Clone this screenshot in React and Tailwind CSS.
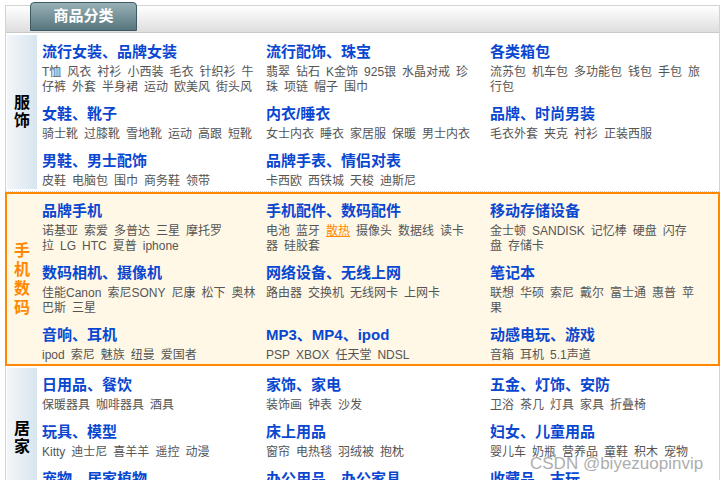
const sections = [
  {
    label: ["服", "饰"],
    hot: false,
    rows: [
      [
        { t: "流行女装、品牌女装", l: [["T恤", "风衣", "衬衫", "小西装", "毛衣", "针织衫", "牛"], ["仔裤", "外套", "半身裙", "运动", "欧美风", "街头风"]] },
        { t: "流行配饰、珠宝", l: [["翡翠", "钻石", "K金饰", "925银", "水晶对戒", "珍"], ["珠", "项链", "帽子", "围巾"]] },
        { t: "各类箱包", l: [["流苏包", "机车包", "多功能包", "钱包", "手包", "旅"], ["行包"]] },
      ],
      [
        { t: "女鞋、靴子", l: [["骑士靴", "过膝靴", "雪地靴", "运动", "高跟", "短靴"]] },
        { t: "内衣/睡衣", l: [["女士内衣", "睡衣", "家居服", "保暖", "男士内衣"]] },
        { t: "品牌、时尚男装", l: [["毛衣外套", "夹克", "衬衫", "正装西服"]] },
      ],
      [
        { t: "男鞋、男士配饰", l: [["皮鞋", "电脑包", "围巾", "商务鞋", "领带"]] },
        { t: "品牌手表、情侣对表", l: [["卡西欧", "西铁城", "天梭", "迪斯尼"]] },
        null,
      ],
    ],
  },
  {
    label: ["手", "机", "数", "码"],
    hot: true,
    rows: [
      [
        { t: "品牌手机", l: [["诺基亚", "索爱", "多普达", "三星", "摩托罗"], ["拉", "LG", "HTC", "夏普", "iphone"]] },
        { t: "手机配件、数码配件", l: [["电池", "蓝牙", "*散热", "摄像头", "数据线", "读卡"], ["器", "硅胶套"]] },
        { t: "移动存储设备", l: [["金士顿", "SANDISK", "记忆棒", "硬盘", "闪存"], ["盘", "存储卡"]] },
      ],
      [
        { t: "数码相机、摄像机", l: [["佳能Canon", "索尼SONY", "尼康", "松下", "奥林"], ["巴斯", "三星"]] },
        { t: "网络设备、无线上网", l: [["路由器", "交换机", "无线网卡", "上网卡"]] },
        { t: "笔记本", l: [["联想", "华硕", "索尼", "戴尔", "富士通", "惠普", "苹"], ["果"]] },
      ],
      [
        { t: "音响、耳机", l: [["ipod", "索尼", "魅族", "纽曼", "爱国者"]] },
        { t: "MP3、MP4、ipod", l: [["PSP", "XBOX", "任天堂", "NDSL"]] },
        { t: "动感电玩、游戏", l: [["音箱", "耳机", "5.1声道"]] },
      ],
    ],
  },
  {
    label: ["居", "家"],
    hot: false,
    rows: [
      [
        { t: "日用品、餐饮", l: [["保暖器具", "咖啡器具", "酒具"]] },
        { t: "家饰、家电", l: [["装饰画", "钟表", "沙发"]] },
        { t: "五金、灯饰、安防", l: [["卫浴", "茶几", "灯具", "家具", "折叠椅"]] },
      ],
      [
        { t: "玩具、模型", l: [["Kitty", "迪士尼", "喜羊羊", "遥控", "动漫"]] },
        { t: "床上用品", l: [["窗帘", "电热毯", "羽绒被", "抱枕"]] },
        { t: "妇女、儿童用品", l: [["婴儿车", "奶瓶", "营养品", "童鞋", "积木", "宠物"]] },
      ],
      [
        { t: "宠物、居家植物", l: [["花卉", "绿植", "水族", "宠物用品"]] },
        { t: "办公用品、办公家具", l: [["打印机", "办公桌", "文具"]] },
        { t: "收藏品、古玩", l: [["邮票", "钱币", "字画", "玉器"]] },
      ],
    ],
  },
];

const FONT = { fontFamily: "'Liberation Sans', 'Noto Sans CJK SC', sans-serif" };

function Cell({ c }) {
  if (!c) return <div />;
  return (
    <div>
      <div className="h-[22px] leading-[22px] text-[15px] font-bold text-[#0a47d1] whitespace-nowrap">
        {c.t}
      </div>
      <div className="pt-[2px]">
        {c.l.map((line, i) => (
          <div key={i} className="h-[15px] leading-[15px] text-[12px] text-[#555555] whitespace-nowrap">
            {line.map((it, j) =>
              it.startsWith("*") ? (
                <span key={j} className="mr-[6px] text-[#ff8800] underline">
                  {it.slice(1)}
                </span>
              ) : (
                <span key={j} className="mr-[6px]">
                  {it}
                </span>
              )
            )}
          </div>
        ))}
      </div>
    </div>
  );
}

function Rows({ rows }) {
  return (
    <div className="flex flex-col gap-[8px] pl-[5px]">
      {rows.map((r, i) => (
        <div key={i} className="grid grid-cols-[224px_224px_224px]">
          {r.map((c, j) => (
            <Cell key={j} c={c} />
          ))}
        </div>
      ))}
    </div>
  );
}

function Label({ chars, hot }) {
  return (
    <div
      className={
        hot
          ? "w-[30px] shrink-0 flex flex-col items-center justify-center text-[16px] leading-[19px] font-bold text-[#ff8800]"
          : "w-[30px] shrink-0 my-[2px] ml-[1px] flex flex-col items-center justify-center text-[16px] leading-[18px] font-bold text-black bg-gradient-to-r from-[#f3f6f9] to-[#d7e5ee]"
      }
    >
      {chars.map((ch, i) => (
        <span key={i}>{ch}</span>
      ))}
    </div>
  );
}

export default function App() {
  const [s1, s2, s3] = sections;
  return (
    <div className="relative w-[725px] h-[480px] overflow-hidden bg-white pt-[5px] px-[5px]" style={FONT}>
      <div className="border-x border-t border-[#d3d3d3] h-[500px]">
        {/* header bar */}
        <div className="h-[27px] border-b border-[#c9c9c9] bg-gradient-to-b from-white to-[#dedede] flex">
          <div className="ml-[24px] -mt-[4px] h-[29px] w-[107px] rounded-t-[4px] border border-[#3f5a62] bg-gradient-to-b from-[#98b1b6] to-[#58767f] flex items-center justify-center text-white text-[15px] font-bold">
            商品分类
          </div>
        </div>

        {/* section 1 */}
        <div className="flex border-b border-dotted border-[#cfcfcf]">
          <Label chars={s1.label} hot={false} />
          <div className="pt-[8px] pb-[2px]">
            <Rows rows={s1.rows} />
          </div>
        </div>

        {/* section 2 */}
        <div className="flex -mx-[1px] border-2 border-[#ff8800] bg-[#fff8e6]">
          <Label chars={s2.label} hot={true} />
          <div className="pt-[6px] pb-[1px]">
            <Rows rows={s2.rows} />
          </div>
        </div>

        {/* section 3 */}
        <div className="flex">
          <Label chars={s3.label} hot={false} />
          <div className="pt-[8px] pb-[2px]">
            <Rows rows={s3.rows} />
          </div>
        </div>
      </div>

      <div className="absolute left-[530px] top-[451px] text-[17px] text-[#9a9a9a] opacity-80 whitespace-nowrap">
        CSDN @biyezuopinvip
      </div>
    </div>
  );
}
